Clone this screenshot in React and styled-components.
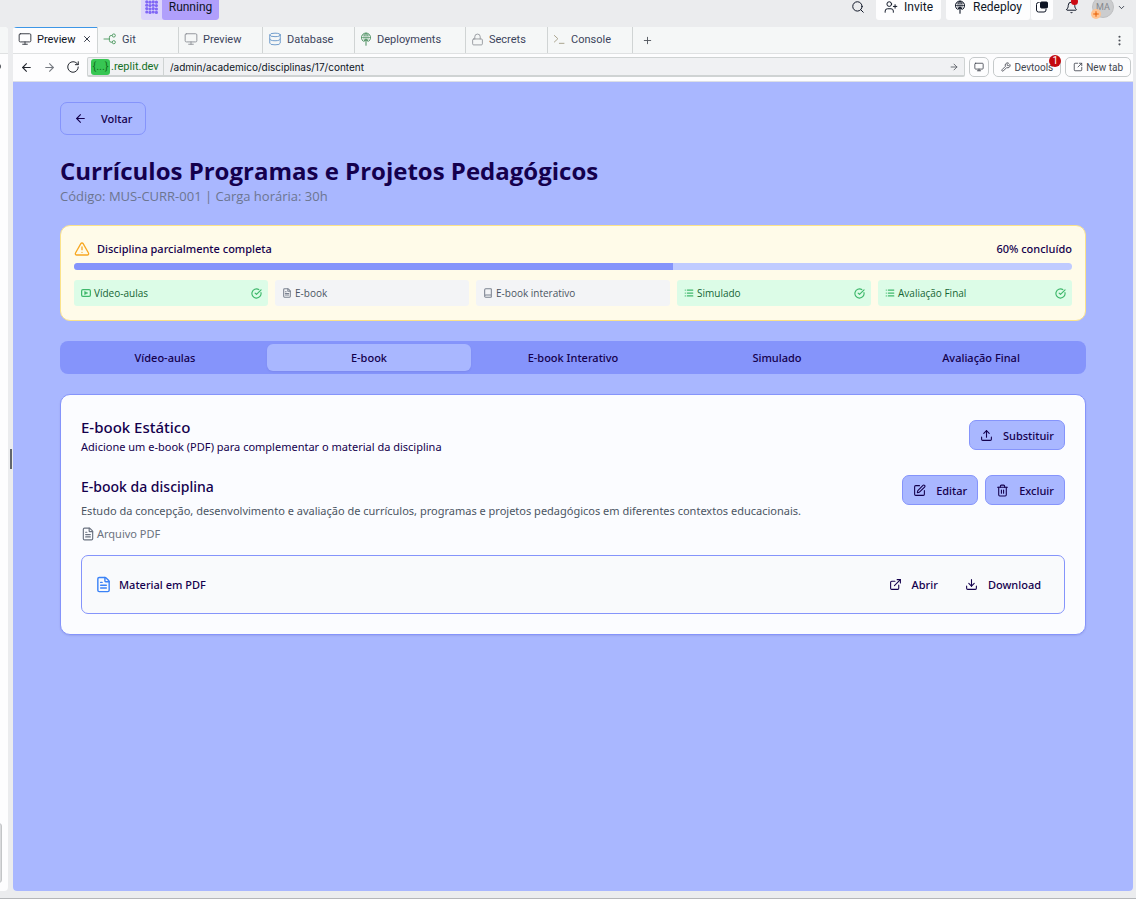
import React from "react";
import styled, { createGlobalStyle, css } from "styled-components";
import {
  Monitor, X, Database, Lock, Plus, ArrowLeft, ArrowRight, RotateCw, Wrench,
  SquareArrowOutUpRight, ExternalLink, Search, UserPlus, Bell, ChevronDown,
  EllipsisVertical, TriangleAlert, FileText, Book, List, CircleCheckBig, Upload,
  Download, SquarePen, Trash2,
} from "lucide-react";

const ui = `Roboto, "Liberation Sans", sans-serif`;
const body = `"Noto Sans", "Open Sans", sans-serif`;
const humanist = `"Open Sans", "Noto Sans", sans-serif`;
const navy = "#14004d";

const Global = createGlobalStyle`
  *, *::before, *::after { box-sizing: border-box; }
  html, body, #root { height: 100%; }
  body { margin: 0; background: #ebecee; font-family: ${ui}; }
  h1, h2, h3, p { margin: 0; }
  button, input { font: inherit; color: inherit; }
  svg { flex: none; display: block; }
`;

const Shell = styled.div`
  min-height: 100%;
  display: flex;
  flex-direction: column;
  border-bottom: 1px solid #b4b6b9;
`;

const TopBar = styled.header`
  height: 27px;
  padding: 0 4px 7px 141px;
  display: flex;
  align-items: flex-end;
  overflow: hidden;
  color: #0e1525;
  font-size: 12px;
`;
const plainButton = css`
  border: 0;
  background: none;
  padding: 0;
  display: flex;
  align-items: center;
  cursor: pointer;
`;
const RunGroup = styled.div`
  display: flex;
  height: 26px;
  border-radius: 3px;
  overflow: hidden;
  background: #dcd5fb;
  margin-right: auto;
`;
const RunIcon = styled.span`
  width: 21px;
  display: flex;
  align-items: center;
  justify-content: center;
`;
const RunButton = styled.button`
  ${plainButton}
  padding: 0 7px;
  width: 57px;
  justify-content: center;
  border-radius: 3px;
  background: #b09ffb;
`;
const TopAction = styled.button`
  ${plainButton}
  position: relative;
  height: 26px;
  gap: ${(p) => p.$gap ?? 7}px;
  padding: 0 ${(p) => p.$pad ?? 8}px;
  border-radius: 3px;
  background: ${(p) => (p.$filled ? "#fdfdfe" : "transparent")};
`;
const ActionPair = styled.div`
  display: flex;
  margin: 0 4px 0 5px;
  & > button + button { border-left: 1px solid #ebecee; }
`;
const BellDot = styled.span`
  position: absolute;
  right: 8px;
  top: 4px;
  width: 7px;
  height: 7px;
  border-radius: 50%;
  background: #cc0a12;
`;
const Avatar = styled.span`
  width: 22px;
  height: 22px;
  border: 1px solid #bfc0c2;
  border-radius: 50%;
  background: #cbccce;
  color: #85888d;
  font-size: 9px;
  display: flex;
  align-items: center;
  justify-content: center;
`;
const AvatarBadge = styled.span`
  position: absolute;
  left: 5px;
  bottom: 1px;
  width: 10px;
  height: 10px;
  border-radius: 50%;
  background: #ffc391;
  color: #e65c00;
  display: flex;
  align-items: center;
  justify-content: center;
`;

const Workspace = styled.div`
  flex: 1;
  display: flex;
  padding: 0 3px 7px 0;
`;
const SidePanel = styled.aside`
  position: relative;
  width: 8px;
  background: #fdfdfe;
  border-radius: 0 4px 4px 0;
  overflow: hidden;
`;
const SideTab = styled.div`
  height: 27px;
  background: #f5f7f7;
  border-bottom: 1px solid #dfe1e2;
`;
const SideDot = styled.span`
  position: absolute;
  left: -3px;
  top: 37px;
  width: 4px;
  height: 5px;
  border-radius: 50%;
  background: #5a5d63;
`;
const SideThumb = styled.span`
  position: absolute;
  left: -4px;
  bottom: 8px;
  width: 6px;
  height: 60px;
  border-radius: 3px;
  background: #d9dadc;
  border: 1px solid #c3c5c7;
`;
const Divider = styled.div`
  width: 5px;
  display: flex;
  align-items: center;
  justify-content: center;
`;
const DividerGrip = styled.span`
  width: 2px;
  height: 20px;
  background: #62666c;
`;
const Pane = styled.section`
  flex: 1;
  min-width: 0;
  display: flex;
  flex-direction: column;
  background: #fdfdfe;
  border-radius: 4px;
  overflow: hidden;
`;

const TabStrip = styled.nav`
  display: flex;
  height: 27px;
  background: #f5f7f7;
  border-bottom: 1px solid #dfe1e2;
  font-size: 11px;
`;
const EditorTab = styled.button`
  ${plainButton}
  width: ${(p) => p.$width}px;
  gap: 5px;
  padding: 0 5px 2px 5px;
  color: ${(p) => (p.$active ? "#0e1525" : "#3c445c")};
  background: ${(p) => (p.$active ? "#fdfdfe" : "transparent")};
  border-right: 1px solid #d0d4d4;
  box-shadow: ${(p) => (p.$active ? "inset 0 1px 0 #3d96e6" : "none")};
  & > svg:first-child { color: ${(p) => p.$tint}; }
  & > svg:last-child:not(:first-child) { margin-left: auto; }
`;
const IconButton = styled.button`
  ${plainButton}
  width: ${(p) => p.$width ?? 23}px;
  justify-content: center;
  color: #50545c;
`;
const Spacer = styled.span`
  flex: 1;
`;

const AddressRow = styled.div`
  height: 28px;
  display: flex;
  align-items: center;
  padding: 0 2px 1px 2px;
  border-bottom: 1px solid #dde0e6;
  font-size: 10px;
  color: #42464f;
`;
const Address = styled.div`
  flex: 1;
  min-width: 0;
  height: 20px;
  margin-left: 3px;
  display: flex;
  align-items: center;
  border: 1px solid #cfd3d3;
  border-bottom-width: 2px;
  border-radius: 2px;
  background: #f0f1f3;
`;
const Host = styled.span`
  height: 100%;
  width: 76px;
  padding-left: 3px;
  display: flex;
  align-items: center;
  gap: 1px;
  border-right: 1px solid #cfd3d3;
  color: #14701f;
  font-size: 11px;
`;
const HostChip = styled.span`
  width: 19px;
  height: 16px;
  border-radius: 3px;
  background: #37c653;
  display: flex;
  align-items: center;
  justify-content: center;
`;
const PathInput = styled.input`
  flex: 1;
  min-width: 0;
  border: 0;
  padding: 0 6px;
  background: none;
  outline: none;
  font-family: Inter, sans-serif;
  font-size: 10px;
  color: #0e1525;
`;
const ToolButton = styled.button`
  ${plainButton}
  position: relative;
  height: 20px;
  margin-left: 4px;
  padding: 0 ${(p) => p.$pad ?? 7}px;
  gap: 3px;
  border: 1px solid #c6cacb;
  border-radius: 5px;
  background: #fdfdfe;
`;
const CountBadge = styled.span`
  position: absolute;
  right: -1px;
  top: -3px;
  width: 12px;
  height: 12px;
  border-radius: 50%;
  background: #c40a10;
  color: #fff;
  font-size: 10px;
  line-height: 12px;
  text-align: center;
`;

const Page = styled.main`
  flex: 1;
  background: #a9b7ff;
  padding: 20px 47px;
  font-family: ${body};
  font-size: 11px;
  color: ${navy};
  display: flex;
  flex-direction: column;
  align-items: stretch;
  gap: 20px;
`;
const Button = styled.button`
  height: ${(p) => (p.$tall ? 33 : 30)}px;
  padding: 0 ${(p) => (p.$ghost ? 9 : 10)}px;
  display: inline-flex;
  align-items: center;
  gap: 10px;
  border: 1px solid ${(p) => (p.$ghost ? "transparent" : "#8594fb")};
  border-radius: 7px;
  background: ${(p) => (p.$ghost ? "transparent" : "#a9b7ff")};
  font-weight: 500;
  cursor: pointer;
`;
const BackButton = styled(Button)`
  align-self: flex-start;
  padding: 0 13px;
  gap: 14px;
`;
const Title = styled.h1`
  font-family: ${humanist};
  font-size: 24px;
  line-height: 32px;
  font-weight: 700;
`;
const Subtitle = styled.p`
  font-family: ${humanist};
  font-size: 13px;
  line-height: 18px;
  color: #6c7590;
`;

const Alert = styled.section`
  padding: 13px 13px 14px;
  border: 1px solid #fbe28a;
  border-radius: 10px;
  background: #fffbe9;
`;
const AlertHead = styled.div`
  display: flex;
  align-items: center;
  gap: 7px;
  line-height: 20px;
  font-weight: 500;
  color: ${navy};
`;
const Track = styled.div`
  height: 7px;
  margin: 4px 0 10px;
  border-radius: 4px;
  background: #c0cbff;
  overflow: hidden;
`;
const Fill = styled.div`
  height: 100%;
  background: #8594fb;
`;
const Chips = styled.ul`
  margin: 0;
  padding: 0;
  list-style: none;
  display: grid;
  grid-template-columns: repeat(5, 1fr);
  gap: 7px;
`;
const Chip = styled.li`
  height: 26px;
  padding: 0 6px 0 7px;
  display: flex;
  align-items: center;
  gap: 3px;
  border-radius: 3px;
  font-family: ${humanist};
  font-size: 10px;
  color: ${(p) => (p.$done ? "#166534" : "#4b5563")};
  background: ${(p) => (p.$done ? "#dcfce7" : "#f3f4f6")};
  & > svg { color: ${(p) => (p.$done ? "#3fb86c" : "#7b8290")}; }
  & > svg:last-child { margin-left: auto; }
`;

const Tabs = styled.div`
  display: grid;
  grid-template-columns: repeat(5, 1fr);
  padding: 3px;
  border-radius: 8px;
  background: #8594fb;
`;
const Tab = styled.button`
  height: 27px;
  border: 0;
  border-radius: 6px;
  padding: 0;
  background: ${(p) => (p.$active ? "#a9b7ff" : "transparent")};
  box-shadow: ${(p) => (p.$active ? "0 1px 2px rgba(20, 0, 77, 0.08)" : "none")};
  font-weight: 500;
  cursor: pointer;
`;

const Card = styled.section`
  padding: 20px;
  border: 1px solid #8594fb;
  border-radius: 10px;
  background: #fbfcff;
  box-shadow: 0 1px 2px rgba(20, 0, 77, 0.1);
`;
const Row = styled.div`
  display: flex;
  justify-content: space-between;
  align-items: ${(p) => p.$align ?? "center"};
`;
const CardTitle = styled.h2`
  font-size: 15px;
  line-height: 24px;
  font-weight: 500;
`;
const CardText = styled.p`
  line-height: 16px;
`;
const Entry = styled(Row)`
  margin: 20px 0 12px;
`;
const EntryTitle = styled.h3`
  font-size: 14px;
  line-height: 24px;
  font-weight: 500;
`;
const EntryText = styled.p`
  margin: 2px 0 4px;
  line-height: 20px;
  color: #4b5563;
`;
const FileKind = styled.p`
  display: flex;
  align-items: center;
  gap: 2px;
  line-height: 18px;
  color: #6b7280;
`;
const Actions = styled.div`
  display: flex;
  gap: 7px;
`;
const FileBox = styled.div`
  padding: 13px 13px 14px;
  display: flex;
  align-items: center;
  justify-content: space-between;
  border: 1px solid #8594fb;
  border-radius: 7px;
  background: #f9fafc;
`;
const FileName = styled.span`
  display: flex;
  align-items: center;
  gap: 7px;
  font-weight: 500;
  & > svg { color: #3b82f6; }
`;

function Dots() {
  const cells = [];
  for (let r = 0; r < 4; r++)
    for (let c = 0; c < 4; c++)
      cells.push(<circle key={`${r}${c}`} cx={1.8 + c * 3.2} cy={1.8 + r * 3.4 + (c % 2 ? 0.4 : 0)} r="1.6" />);
  return <svg width="13" height="14" viewBox="0 0 13 14" fill="#8168f5" aria-hidden="true">{cells}</svg>;
}
function DeployIcon() {
  return (
    <svg width="12" height="14" viewBox="0 0 12 14" fill="none" stroke="currentColor" strokeLinecap="round" strokeLinejoin="round" aria-hidden="true">
      <path strokeWidth="1" d="M3.200 9.300A4.600 4.600 0 1 1 8.800 9.300" />
      <path strokeWidth="0.700" d="M1.600 5.500h8.800M2.800 3h6.400M4.300 8.300C3.400 5.500 4 2.500 6 1c2 1.500 2.600 4.500 1.700 7.300M6 1v6" />
      <path strokeWidth="1.100" d="M6 7.200v6M4.200 9L6 7.200 7.800 9" />
    </svg>
  );
}
function GitIcon() {
  return (
    <svg width="14" height="14" viewBox="0 0 24 24" fill="none" stroke="currentColor" strokeWidth="1.600" aria-hidden="true">
      <circle cx="18.500" cy="6" r="2.700" />
      <circle cx="18.500" cy="17.500" r="2.700" />
      <path d="M1 12h10M15.800 6H14a3 3 0 0 0-3 3v5.500a3 3 0 0 0 3 3h1.800" />
    </svg>
  );
}
function PromptIcon() {
  return (
    <svg width="13" height="14" viewBox="0 0 24 24" fill="none" stroke="currentColor" strokeWidth="1.800" aria-hidden="true">
      <path d="M2 5l7 6.500L2 18M11 20h10" />
    </svg>
  );
}
function LayoutIcon() {
  return (
    <svg width="12" height="12" viewBox="0 0 24 24" fill="none" stroke="currentColor" strokeWidth="2" aria-hidden="true">
      <path d="M7 3H5a4 4 0 0 0-4 4v11a4 4 0 0 0 4 4h11a4 4 0 0 0 4-4v-2" />
      <rect x="9" y="2" width="14" height="12" rx="2" fill="currentColor" />
    </svg>
  );
}
function VideoIcon() {
  return (
    <svg width="10" height="10" viewBox="0 0 24 24" fill="none" stroke="currentColor" strokeWidth="3" aria-hidden="true">
      <rect x="1.500" y="4" width="21" height="16" rx="3" />
      <path d="M8.500 8v8l8-4z" fill="currentColor" stroke="currentColor" strokeWidth="1" />
    </svg>
  );
}

const editorTabs = [
  { label: "Preview", width: 85, tint: "#3c4048", icon: <Monitor size={14} strokeWidth={1.7} />, active: true },
  { label: "Git", width: 81, tint: "#4d9a61", icon: <GitIcon /> },
  { label: "Preview", width: 84, tint: "#94979d", icon: <Monitor size={14} strokeWidth={1.7} /> },
  { label: "Database", width: 92, tint: "#6f9ccb", icon: <Database size={14} strokeWidth={1.7} /> },
  { label: "Deployments", width: 111, tint: "#57966a", icon: <DeployIcon /> },
  { label: "Secrets", width: 82, tint: "#94979d", icon: <Lock size={13} strokeWidth={1.7} /> },
  { label: "Console", width: 85, tint: "#a9a28c", icon: <PromptIcon /> },
];

const steps = [
  { label: "Vídeo-aulas", icon: <VideoIcon />, done: true },
  { label: "E-book", icon: <FileText size={10} strokeWidth={2.5} /> },
  { label: "E-book interativo", icon: <Book size={10} strokeWidth={2.5} /> },
  { label: "Simulado", icon: <List size={10} strokeWidth={3} />, done: true },
  { label: "Avaliação Final", icon: <List size={10} strokeWidth={3} />, done: true },
];

const sections = ["Vídeo-aulas", "E-book", "E-book Interativo", "Simulado", "Avaliação Final"];
const progress = 60;

export default function App() {
  return (
    <>
      <Global />
      <Shell>
        <TopBar>
          <RunGroup>
            <RunIcon><Dots /></RunIcon>
            <RunButton>Running</RunButton>
          </RunGroup>
          <TopAction aria-label="Buscar" $pad={11}><Search size={14} strokeWidth={1.7} /></TopAction>
          <TopAction $filled $gap={6}><UserPlus size={14} strokeWidth={1.7} />Invite</TopAction>
          <ActionPair>
            <TopAction $filled><DeployIcon />Redeploy</TopAction>
            <TopAction $filled $pad={5} aria-label="Layout"><LayoutIcon /></TopAction>
          </ActionPair>
          <TopAction aria-label="Notificações"><Bell size={13} strokeWidth={1.8} /><BellDot /></TopAction>
          <TopAction $pad={6} $gap={3} aria-label="Conta">
            <Avatar>MA</Avatar>
            <AvatarBadge><Plus size={8} strokeWidth={3} /></AvatarBadge>
            <ChevronDown size={9} />
          </TopAction>
        </TopBar>

        <Workspace>
          <SidePanel>
            <SideTab />
            <SideDot />
            <SideThumb />
          </SidePanel>
          <Divider><DividerGrip /></Divider>
          <Pane>
            <TabStrip>
              {editorTabs.map((t, i) => (
                <EditorTab key={i} $width={t.width} $tint={t.tint} $active={t.active}>
                  {t.icon}
                  <span>{t.label}</span>
                  {t.active && <X size={10} />}
                </EditorTab>
              ))}
              <IconButton $width={28} aria-label="Nova aba"><Plus size={11} /></IconButton>
              <Spacer />
              <IconButton $width={28} aria-label="Mais opções"><EllipsisVertical size={13} /></IconButton>
            </TabStrip>

            <AddressRow>
              <IconButton aria-label="Voltar página"><ArrowLeft size={13} color="#22262e" /></IconButton>
              <IconButton aria-label="Avançar página"><ArrowRight size={13} color="#777b82" /></IconButton>
              <IconButton aria-label="Recarregar"><RotateCw size={14} strokeWidth={1.7} color="#22262e" /></IconButton>
              <Address>
                <Host><HostChip>{"{...}"}</HostChip>.replit.dev</Host>
                <PathInput aria-label="Caminho" defaultValue="/admin/academico/disciplinas/17/content" />
                <IconButton $width={20} aria-label="Ir"><ArrowRight size={10} /></IconButton>
              </Address>
              <ToolButton $pad={4} aria-label="Dispositivo"><Monitor size={10} /></ToolButton>
              <ToolButton><Wrench size={10} />Devtools<CountBadge>1</CountBadge></ToolButton>
              <ToolButton><SquareArrowOutUpRight size={10} />New tab</ToolButton>
            </AddressRow>

            <Page>
              <BackButton $tall><ArrowLeft size={13} />Voltar</BackButton>
              <div>
                <Title>Currículos Programas e Projetos Pedagógicos</Title>
                <Subtitle>Código: MUS-CURR-001 | Carga horária: 30h</Subtitle>
              </div>

              <Alert>
                <AlertHead>
                  <TriangleAlert size={16} color="#f7a823" />
                  Disciplina parcialmente completa
                  <Spacer />
                  <span>{progress}% concluído</span>
                </AlertHead>
                <Track role="progressbar" aria-label="Progresso da disciplina" aria-valuenow={progress} aria-valuemin={0} aria-valuemax={100}>
                  <Fill style={{ width: `${progress}%` }} />
                </Track>
                <Chips>
                  {steps.map((s) => (
                    <Chip key={s.label} $done={s.done}>
                      {s.icon}
                      <span>{s.label}</span>
                      {s.done && <CircleCheckBig size={11} strokeWidth={2.5} />}
                    </Chip>
                  ))}
                </Chips>
              </Alert>

              <Tabs role="tablist">
                {sections.map((s, i) => (
                  <Tab key={s} role="tab" aria-selected={i === 1} $active={i === 1}>{s}</Tab>
                ))}
              </Tabs>

              <Card>
                <Row>
                  <div>
                    <CardTitle>E-book Estático</CardTitle>
                    <CardText>Adicione um e-book (PDF) para complementar o material da disciplina</CardText>
                  </div>
                  <Button><Upload size={13} />Substituir</Button>
                </Row>
                <Entry $align="flex-start">
                  <div>
                    <EntryTitle>E-book da disciplina</EntryTitle>
                    <EntryText>
                      Estudo da concepção, desenvolvimento e avaliação de currículos, programas e projetos pedagógicos em diferentes contextos educacionais.
                    </EntryText>
                    <FileKind><FileText size={14} />Arquivo PDF</FileKind>
                  </div>
                  <Actions>
                    <Button><SquarePen size={13} />Editar</Button>
                    <Button><Trash2 size={13} />Excluir</Button>
                  </Actions>
                </Entry>
                <FileBox>
                  <FileName><FileText size={17} />Material em PDF</FileName>
                  <Actions>
                    <Button $ghost><ExternalLink size={13} />Abrir</Button>
                    <Button $ghost><Download size={13} />Download</Button>
                  </Actions>
                </FileBox>
              </Card>
            </Page>
          </Pane>
        </Workspace>
      </Shell>
    </>
  );
}
